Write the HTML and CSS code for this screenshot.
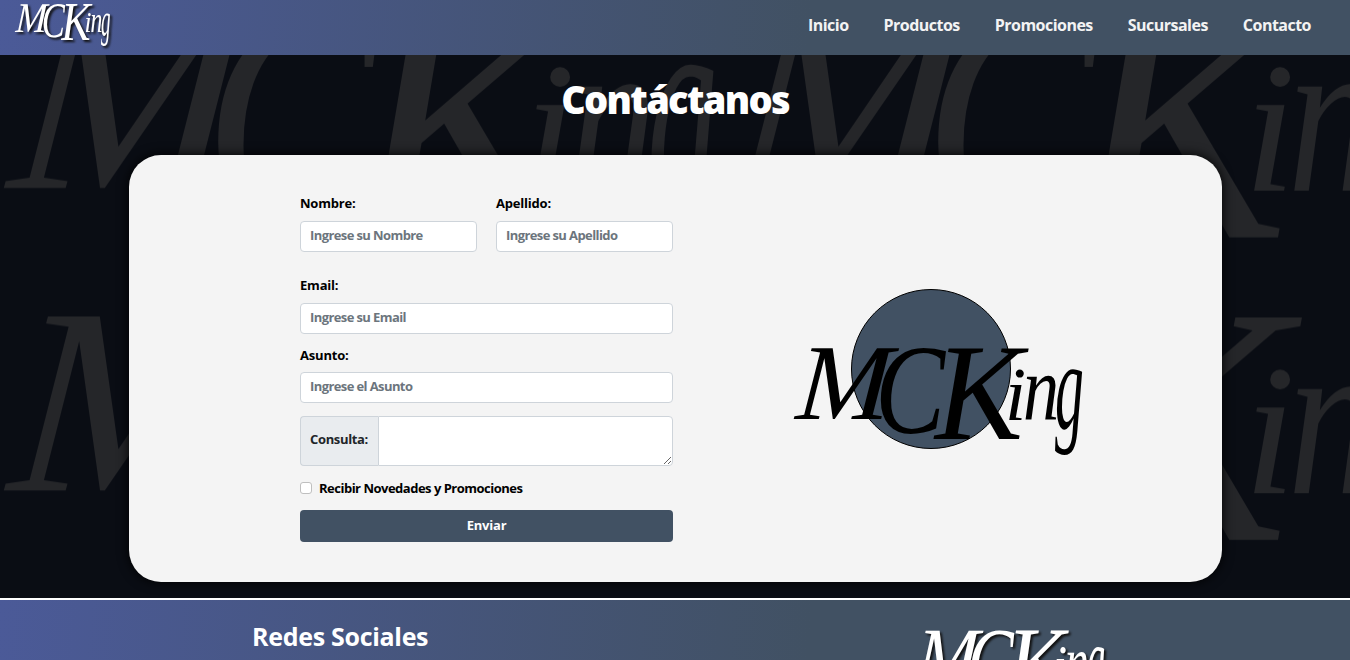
FILE: index.html
```html
<!DOCTYPE html>
<html lang="es">
<head>
<meta charset="utf-8">
<title>MCking - Contacto</title>
<link rel="stylesheet" href="styles.css">
</head>
<body>
<svg class="defs" width="0" height="0" aria-hidden="true">
  <defs>
    <g id="wordmark" class="script">
      <text transform="translate(-2 74) skewX(-4)" font-size="108" textLength="94" lengthAdjust="spacingAndGlyphs">M</text>
      <text transform="translate(78 88)" font-size="128" textLength="70" lengthAdjust="spacingAndGlyphs">C</text>
      <text transform="translate(138 94)" font-size="138" textLength="88" lengthAdjust="spacingAndGlyphs">K</text>
      <text transform="translate(208 75)" font-size="76">i</text>
      <text transform="translate(226 75) scale(.86 1.1)" font-size="84">n</text>
      <text transform="translate(258 83) scale(.72 1.57)" font-size="80">g</text>
    </g>
    <pattern id="tile" class="watermark" width="720" height="302.5" patternUnits="userSpaceOnUse" patternTransform="translate(0 -57)">
      <use href="#wordmark" transform="translate(12 8) scale(2.46)"/>
    </pattern>
  </defs>
</svg>

<header class="topbar">
  <svg class="brand" viewBox="0 0 285 120" preserveAspectRatio="none"><use href="#wordmark"/></svg>
  <nav class="nav">
    <a>Inicio</a><a>Productos</a><a>Promociones</a><a>Sucursales</a><a>Contacto</a>
  </nav>
</header>

<main class="main">
  <svg class="backdrop" aria-hidden="true"><rect width="100%" height="100%" fill="url(#tile)"/></svg>
  <h1 class="title">Contáctanos</h1>
  <section class="card">
    <form class="form">
      <div class="row">
        <div class="field"><label>Nombre:</label><input class="control" placeholder="Ingrese su Nombre"></div>
        <div class="field"><label>Apellido:</label><input class="control" placeholder="Ingrese su Apellido"></div>
      </div>
      <div class="field email"><label>Email:</label><input class="control" placeholder="Ingrese su Email"></div>
      <div class="field subject"><label>Asunto:</label><input class="control" placeholder="Ingrese el Asunto"></div>
      <div class="group"><span class="addon">Consulta:</span><textarea class="area"></textarea></div>
      <label class="check"><input type="checkbox" class="box">Recibir Novedades y Promociones</label>
      <button type="button" class="send">Enviar</button>
    </form>
    <svg class="emblem" width="288" height="174" viewBox="796 288 288 174">
      <circle cx="931" cy="369" r="79.5" fill="#415163" stroke="#000"/>
      <use href="#wordmark" x="797" y="345"/>
    </svg>
  </section>
</main>

<footer class="footer">
  <h2 class="social">Redes Sociales</h2>
  <svg class="footmark" viewBox="0 0 285 120" preserveAspectRatio="none"><use href="#wordmark"/></svg>
</footer>
</body>
</html>
```
FILE: styles.css
```css
* { box-sizing: border-box; }
body {
  margin: 0;
  height: 660px;
  overflow: hidden;
  font-family: "Open Sans", "Noto Sans", sans-serif;
  font-weight: 700;
  background: #0a0d14;
}
.defs { display: block; height: 0; }
.script { font-family: "Liberation Serif", serif; font-style: italic; font-weight: 400; }
.watermark { fill: #252629; }
.topbar, .footer { background: linear-gradient(95deg, #4b5a98 0%, #415163 60%); }
.topbar {
  height: 55px;
  display: flex;
  justify-content: space-between;
  padding: 0 39px 0 16px;
}
.brand { width: 94px; height: 47px; margin-top: 3px; fill: #fff; filter: drop-shadow(2px 2px 1px #111); overflow: visible; }
.nav { display: flex; gap: 35px; align-items: center; padding-bottom: 5px; font-size: 16px; letter-spacing: -.52px; color: #f3f3f3; }
.main { position: relative; height: 543px; padding-top: 20px; overflow: hidden; }
.backdrop { position: absolute; inset: 0; width: 100%; height: 100%; }
.title {
  position: relative;
  margin: 0;
  height: 80px;
  line-height: 48px;
  text-align: center;
  font-size: 38px;
  font-weight: 800;
  letter-spacing: -1.7px;
  color: #fff;
}
.card {
  position: relative;
  width: 1093px;
  height: 427px;
  margin-left: 129px;
  padding: 38px 0 0 171px;
  display: flex;
  align-items: flex-start;
  background: #f4f4f4;
  border-radius: 32px;
  box-shadow: 0 0 12px #000;
}
.form { width: 373px; font-size: 13px; letter-spacing: -.5px; display: flex; flex-direction: column; color: #000; }
.row { display: grid; grid-template-columns: 1fr 1fr; gap: 19px; }
.field { display: flex; flex-direction: column; gap: 8px; }
.field label { line-height: 20px; letter-spacing: -.2px; }
.email { margin-top: 23px; }
.subject { margin-top: 11px; gap: 7px; }
.control, .area {
  font: inherit;
  letter-spacing: -.6px;
  width: 100%;
  height: 31px;
  padding: 3px 9px 6px;
  border: 1px solid #ced4da;
  border-radius: 4px;
  background: #fff;
}
.control::placeholder { color: #6c757d; opacity: 1; }
.group { display: flex; height: 50px; margin-top: 13px; }
.addon {
  flex: 0 0 78px;
  display: flex;
  align-items: center;
  padding: 0 0 4px 9px;
  letter-spacing: -.35px;
  color: #212529;
  background: #e9ecef;
  border: 1px solid #ced4da;
  border-right: 0;
  border-radius: 4px 0 0 4px;
}
.area { height: 50px; min-width: 0; border-radius: 0 4px 4px 0; resize: vertical; }
.check { display: flex; align-items: center; gap: 7px; margin-top: 12px; line-height: 20px; }
.box { appearance: none; width: 12px; height: 12px; margin: 0; background: #fff; border: 1px solid #bfbfbf; border-radius: 3px; }
.send { font: inherit; letter-spacing: -.2px; height: 32px; margin-top: 12px; padding: 0 0 2px; border: 0; border-radius: 4px; color: #fff; background: #415163; }
.emblem { flex: none; margin: 95px 0 0 123px; overflow: visible; }
.footer { height: 62px; overflow: hidden; border-top: 2px solid #fff; display: flex; padding-left: 252px; }
.social { flex: 0 0 664px; margin: 18px 0 0; font-size: 25px; line-height: 36px; letter-spacing: -.3px; color: #fff; }
.footmark { flex: none; width: 188px; height: 92px; margin-top: 28px; fill: #fff; filter: drop-shadow(2px 2px 1px #111); overflow: visible; }
```
